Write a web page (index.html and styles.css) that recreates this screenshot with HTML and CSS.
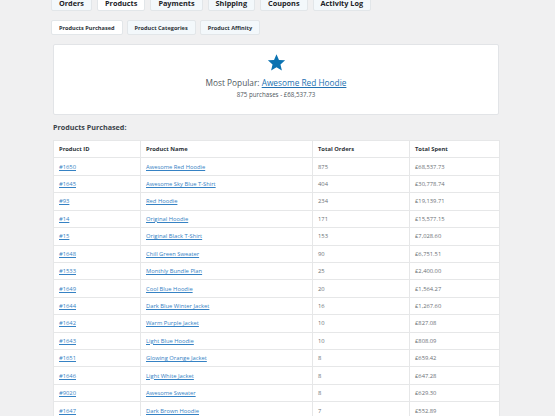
FILE: index.html
```html
<!DOCTYPE html>
<html>
<head>
<meta charset="utf-8">
<link rel="stylesheet" href="styles.css">
</head>
<body>
<div class="wrap">
  <nav class="tabs">
    <a class="tab">Orders</a>
    <a class="tab active">Products</a>
    <a class="tab">Payments</a>
    <a class="tab">Shipping</a>
    <a class="tab">Coupons</a>
    <a class="tab">Activity Log</a>
  </nav>
  <nav class="subtabs">
    <a class="subtab active">Products Purchased</a>
    <a class="subtab">Product Categories</a>
    <a class="subtab">Product Affinity</a>
  </nav>
  <section class="card">
    <svg class="star" viewBox="0 0 24 24" width="19" height="19"><path d="M12 1.5l3.1 7.2 7.8.6-5.9 5.1 1.8 7.6L12 17.9l-6.8 4.1 1.8-7.6-5.9-5.1 7.8-.6z" fill="#0a72b1"/></svg>
    <p class="popular">Most Popular: <a href="#">Awesome Red Hoodie</a></p>
    <p class="meta">875 purchases - £68,537.73</p>
  </section>
  <h2 class="heading">Products Purchased:</h2>
  <table class="grid">
    <colgroup><col class="c1"><col class="c2"><col class="c3"><col class="c4"></colgroup>
    <thead>
      <tr><th>Product ID</th><th>Product Name</th><th>Total Orders</th><th>Total Spent</th></tr>
    </thead>
    <tbody>
      <tr><td><a href="#">#1650</a></td><td><a href="#">Awesome Red Hoodie</a></td><td>875</td><td>£68,537.73</td></tr>
      <tr><td><a href="#">#1645</a></td><td><a href="#">Awesome Sky Blue T-Shirt</a></td><td>404</td><td>£30,778.74</td></tr>
      <tr><td><a href="#">#93</a></td><td><a href="#">Red Hoodie</a></td><td>234</td><td>£19,139.71</td></tr>
      <tr><td><a href="#">#14</a></td><td><a href="#">Original Hoodie</a></td><td>171</td><td>£15,577.15</td></tr>
      <tr><td><a href="#">#15</a></td><td><a href="#">Original Black T-Shirt</a></td><td>153</td><td>£7,028.60</td></tr>
      <tr><td><a href="#">#1648</a></td><td><a href="#">Chill Green Sweater</a></td><td>90</td><td>£6,751.51</td></tr>
      <tr><td><a href="#">#1533</a></td><td><a href="#">Monthly Bundle Plan</a></td><td>25</td><td>£2,400.00</td></tr>
      <tr><td><a href="#">#1649</a></td><td><a href="#">Cool Blue Hoodie</a></td><td>20</td><td>£1,564.27</td></tr>
      <tr><td><a href="#">#1644</a></td><td><a href="#">Dark Blue Winter Jacket</a></td><td>16</td><td>£1,267.60</td></tr>
      <tr><td><a href="#">#1642</a></td><td><a href="#">Warm Purple Jacket</a></td><td>10</td><td>£827.08</td></tr>
      <tr><td><a href="#">#1643</a></td><td><a href="#">Light Blue Hoodie</a></td><td>10</td><td>£808.09</td></tr>
      <tr><td><a href="#">#1651</a></td><td><a href="#">Glowing Orange Jacket</a></td><td>8</td><td>£659.42</td></tr>
      <tr><td><a href="#">#1646</a></td><td><a href="#">Light White Jacket</a></td><td>8</td><td>£647.28</td></tr>
      <tr><td><a href="#">#9020</a></td><td><a href="#">Awesome Sweater</a></td><td>8</td><td>£629.30</td></tr>
      <tr><td><a href="#">#1647</a></td><td><a href="#">Dark Brown Hoodie</a></td><td>7</td><td>£552.89</td></tr>
    </tbody>
  </table>
</div>
</body>
</html>
```
FILE: styles.css
```css
html, body {
  margin: 0;
  padding: 0;
  background: #f0f0f1;
  font-family: "Open Sans", "Noto Sans", sans-serif;
  color: #3c434a;
  overflow: hidden;
}
.wrap {
  width: 446px;
  padding-left: 53px;
  margin-top: -5px;
}
.tabs {
  display: flex;
  gap: 5px;
  margin-left: -2px;
}
.tab {
  display: flex;
  align-items: center;
  height: 14px;
  padding: 0 7px;
  font-size: 7.3px;
  font-weight: 700;
  color: #1d2327;
  background: #f3f8fb;
  border: 1px solid #e2e6e9;
  border-radius: 2px;
}
.tab.active {
  background: #fff;
}
.subtabs {
  display: flex;
  gap: 4px;
  margin-left: -2px;
  margin-top: 9px;
}
.subtab {
  display: flex;
  align-items: center;
  height: 13px;
  padding: 0 7px;
  font-size: 5.6px;
  font-weight: 700;
  color: #2c3338;
  background: #f3f8fb;
  border: 1px solid #e2e6e9;
  border-radius: 2px;
}
.subtab.active {
  background: #fff;
}
.card {
  margin-top: 9px;
  background: #fff;
  border: 1px solid #e2e4e7;
  border-radius: 2px;
  height: 69px;
  display: flex;
  flex-direction: column;
  align-items: center;
}
.star {
  margin-top: 8px;
  display: block;
}
.popular {
  margin: 5px 0 0;
  font-size: 8.3px;
  line-height: 11px;
  color: #50575e;
}
.popular a {
  color: #2271b1;
}
.meta {
  margin: 2px 0 0;
  font-size: 6.2px;
  line-height: 9px;
  color: #50575e;
}
.heading {
  margin: 7px 0 0;
  font-size: 7.2px;
  line-height: 10px;
  font-weight: 700;
  color: #3c434a;
}
.grid {
  margin-top: 8px;
  width: 446px;
  border-collapse: collapse;
  background: #fff;
  table-layout: fixed;
}
.c1 { width: 87px; }
.c2 { width: 172px; }
.c3 { width: 97px; }
.c4 { width: 90px; }
.grid th, .grid td {
  height: 16.43px;
  padding: 0 0 0 5px;
  border: 1px solid #e6e7e8;
  text-align: left;
  font-size: 5.8px;
  white-space: nowrap;
  color: #6b7075;
}
.grid th {
  font-weight: 700;
  color: #2c3338;
}
.grid a {
  color: #3582c4;
}
```
